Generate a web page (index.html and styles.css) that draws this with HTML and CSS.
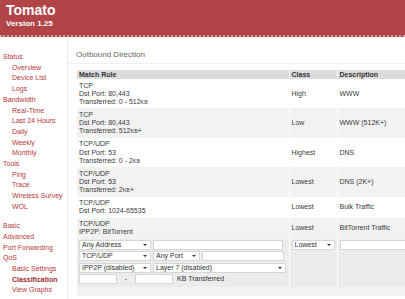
FILE: index.html
```html
<!DOCTYPE html>
<html>
<head>
<meta charset="utf-8">
<link rel="stylesheet" href="styles.css">
</head>
<body>
<header class="hdr">
  <div class="title">Tomato</div>
  <div class="ver">Version 1.25</div>
</header>
<div class="main">
  <nav class="nav">
    <div class="grp">
      <a class="top">Status</a>
      <a class="sub">Overview</a>
      <a class="sub">Device List</a>
      <a class="sub">Logs</a>
      <a class="top">Bandwidth</a>
      <a class="sub">Real-Time</a>
      <a class="sub">Last 24 Hours</a>
      <a class="sub">Daily</a>
      <a class="sub">Weekly</a>
      <a class="sub">Monthly</a>
      <a class="top">Tools</a>
      <a class="sub">Ping</a>
      <a class="sub">Trace</a>
      <a class="sub">Wireless Survey</a>
      <a class="sub">WOL</a>
    </div>
    <div class="grp gap">
      <a class="top">Basic</a>
      <a class="top">Advanced</a>
      <a class="top">Port Forwarding</a>
      <a class="top">QoS</a>
      <a class="sub">Basic Settings</a>
      <a class="sub cur">Classification</a>
      <a class="sub">View Graphs</a>
    </div>
  </nav>
  <div class="content">
    <div class="sect">Outbound Direction</div>
    <table class="grid">
      <colgroup><col class="c1"><col class="c2"><col class="c3"></colgroup>
      <thead>
        <tr><th>Match Rule</th><th>Class</th><th>Description</th></tr>
      </thead>
      <tbody>
        <tr><td>TCP<br>Dst Port: 80,443<br>Transferred: 0 - 512<span class="u">KB</span></td><td class="m">High</td><td class="m">WWW</td></tr>
        <tr class="alt"><td>TCP<br>Dst Port: 80,443<br>Transferred: 512<span class="u">KB</span>+</td><td class="m">Low</td><td class="m">WWW (512K+)</td></tr>
        <tr><td>TCP/UDP<br>Dst Port: 53<br>Transferred: 0 - 2<span class="u">KB</span></td><td class="m">Highest</td><td class="m">DNS</td></tr>
        <tr class="alt"><td>TCP/UDP<br>Dst Port: 53<br>Transferred: 2<span class="u">KB</span>+</td><td class="m">Lowest</td><td class="m">DNS (2K+)</td></tr>
        <tr><td>TCP/UDP<br>Dst Port: 1024-65535</td><td class="m">Lowest</td><td class="m">Bulk Traffic</td></tr>
        <tr class="alt"><td>TCP/UDP<br>IPP2P: BitTorrent</td><td class="m">Lowest</td><td class="m">BitTorrent Traffic</td></tr>
        <tr class="edit">
          <td>
            <div class="line">
              <span class="sel w72"><select><option>Any Address</option></select></span>
              <input class="txt w130" type="text">
            </div>
            <div class="line">
              <span class="sel w72"><select><option>TCP/UDP</option></select></span>
              <span class="sel w47"><select><option>Any Port</option></select></span>
              <input class="txt w82" type="text">
            </div>
            <div class="line">
              <span class="sel w72"><select><option>IPP2P (disabled)</option></select></span>
              <span class="sel w133"><select><option>Layer 7 (disabled)</option></select></span>
            </div>
            <div class="line last">
              <input class="txt w37" type="text">
              <span class="dash">-</span>
              <input class="txt w37" type="text">
              <span class="kb">KB Transferred</span>
            </div>
          </td>
          <td><span class="sel w43"><select><option>Lowest</option></select></span></td>
          <td><input class="txt w100" type="text"></td>
        </tr>
        <tr class="foot"><td colspan="3"></td></tr>
      </tbody>
    </table>
  </div>
</div>
</body>
</html>
```
FILE: styles.css
```css
html, body {
  margin: 0;
  padding: 0;
  overflow: hidden;
  background: #fff;
}
body {
  font-family: "Liberation Sans", Arial, sans-serif;
  font-size: 7px;
  color: #3a3a3a;
  width: 405px;
  height: 299px;
}
.hdr {
  height: 35px;
  background: #b04446;
  border-bottom: 2px dotted #d89a9a;
  color: #fff;
  padding-left: 6px;
}
.title {
  font-weight: bold;
  font-size: 14px;
  line-height: 16px;
  padding-top: 1.5px;
}
.ver {
  font-weight: bold;
  font-size: 8px;
  line-height: 10px;
  margin-top: 1px;
}
.main {
  display: grid;
  grid-template-columns: 67px 1fr;
  height: 262px;
}
.nav {
  padding-top: 15px;
  line-height: 10.7px;
  font-size: 7px;
}
.nav a {
  display: block;
  color: #b5383c;
  white-space: nowrap;
}
.nav .top { padding-left: 3px; }
.nav .sub { padding-left: 12px; }
.nav .cur { font-weight: bold; color: #9c2a30; }
.nav .gap { margin-top: 8.6px; }
.content {
  border-left: 1px solid #ececec;
  min-width: 0;
}
.sect {
  font-size: 8px;
  line-height: 10px;
  color: #666;
  padding: 13px 0 3px 8px;
  border-bottom: 1px solid #f0f0f0;
}
.grid {
  margin: 6px 0 0 9px;
  border-collapse: collapse;
  table-layout: fixed;
  width: 380px;
}
.c1 { width: 212px; }
.c2 { width: 48px; }
.c3 { width: 120px; }
.grid th {
  background: #dcdcdc;
  text-align: left;
  font-weight: bold;
  line-height: 8px;
  padding: 1px 2px 0;
  color: #333;
  border-left: 1px solid #fff;
}
.grid th:first-child, .grid td:first-child { border-left: 0; }
.grid td {
  vertical-align: top;
  line-height: 8.3px;
  padding: 2.5px 2px 2px;
  border-left: 1px solid #fff;
  white-space: nowrap;
}
.grid td.m { vertical-align: middle; }
.grid tr.alt td { background: #f2f2f2; }
.u { font-size: 5.5px; }
.grid tr.edit td {
  background: #ececec;
  padding: 1px 2px 1px;
}
.grid tr.foot td {
  background: #f3f3f3;
  height: 9px;
  padding: 0;
}
.line {
  display: flex;
  align-items: center;
  gap: 2px;
  height: 10px;
  margin-bottom: 1.5px;
}
.line.last { margin-top: 1.5px; }
.sel {
  position: relative;
  display: inline-block;
  height: 10px;
}
.sel select {
  -webkit-appearance: none;
  appearance: none;
  width: 100%;
  height: 10px;
  box-sizing: border-box;
  border: 1px solid #d6d6d6;
  background: #fff;
  font-family: "Liberation Sans", Arial, sans-serif;
  font-size: 7px;
  line-height: 8px;
  padding: 0 0 0 2px;
  margin: 0;
  color: #333;
  border-radius: 0;
  display: block;
}
.sel::after {
  content: "";
  position: absolute;
  right: 4px;
  top: 4px;
  border-left: 2px solid transparent;
  border-right: 2px solid transparent;
  border-top: 2.5px solid #333;
}
.txt {
  box-sizing: border-box;
  height: 10px;
  border: 1px solid #d6d6d6;
  background: #fff;
  padding: 0;
  margin: 0;
  font-size: 7px;
  border-radius: 0;
}
.w72 { width: 72px; }
.w47 { width: 47px; }
.w130 { width: 130px; }
.w82 { width: 82px; }
.w133 { width: 133px; }
.w37 { width: 38px; }
.w43 { width: 43px; }
.w100 { width: 100px; }
.dash { width: 14px; text-align: center; color: #444; }
.kb { margin-left: 2px; color: #333; }
```
